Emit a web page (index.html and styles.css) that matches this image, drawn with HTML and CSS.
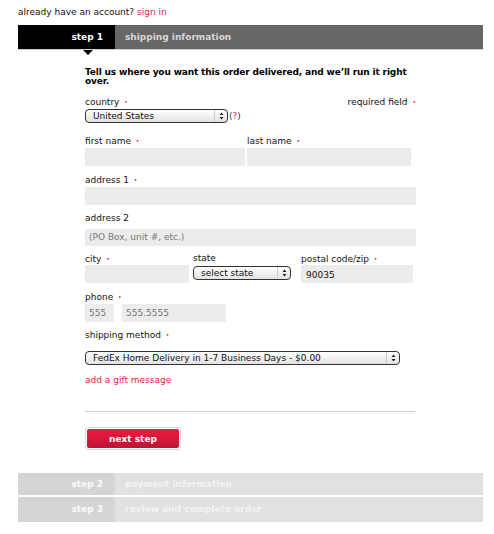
FILE: index.html
```html
<!DOCTYPE html>
<html>
<head>
<meta charset="utf-8">
<link rel="stylesheet" href="styles.css">
</head>
<body>
<div class="page">
  <div class="account">already have an account? <a class="link">sign in</a></div>

  <div class="step active">
    <div class="step-num">step 1</div>
    <div class="step-title">shipping information</div>
    <span class="pointer"></span>
  </div>

  <div class="form">
    <p class="intro">Tell us where you want this order delivered, and we’ll run it right over.</p>

    <div class="label-row">
      <span class="label">country <i class="req">•</i></span>
      <span class="label">required field <i class="req">•</i></span>
    </div>
    <div class="country-row">
      <div class="select sel-country"><span>United States</span><span class="arrows"><svg width="5" height="8" viewBox="0 0 5 8"><path d="M2.5 0.5 L4.5 3 L0.5 3 Z M2.5 7.5 L4.5 5 L0.5 5 Z" fill="#222"/></svg></span></div>
      <span class="help">(<span class="q">?</span>)</span>
    </div>

    <div class="row two">
      <div class="field">
        <span class="label">first name <i class="req">•</i></span>
        <div class="input w-first"></div>
      </div>
      <div class="field">
        <span class="label">last name <i class="req">•</i></span>
        <div class="input w-last"></div>
      </div>
    </div>

    <div class="field block addr1">
      <span class="label">address 1 <i class="req">•</i></span>
      <div class="input w-full"></div>
    </div>

    <div class="field block addr2">
      <span class="label">address 2</span>
      <div class="input w-full short placeholder">(PO Box, unit #, etc.)</div>
    </div>

    <div class="row three">
      <div class="field">
        <span class="label">city <i class="req">•</i></span>
        <div class="input w-city"></div>
      </div>
      <div class="field">
        <span class="label">state</span>
        <div class="select sel-state"><span>select state</span><span class="arrows"><svg width="5" height="8" viewBox="0 0 5 8"><path d="M2.5 0.5 L4.5 3 L0.5 3 Z M2.5 7.5 L4.5 5 L0.5 5 Z" fill="#222"/></svg></span></div>
      </div>
      <div class="field">
        <span class="label">postal code/zip <i class="req">•</i></span>
        <div class="input w-zip value">90035</div>
      </div>
    </div>

    <div class="field block phone-field">
      <span class="label">phone <i class="req">•</i></span>
      <div class="phone">
        <div class="input w-area placeholder">555</div>
        <div class="input w-num placeholder">555.5555</div>
      </div>
    </div>

    <div class="field block ship">
      <span class="label">shipping method <i class="req">•</i></span>
      <div class="select sel-ship"><span>FedEx Home Delivery in 1-7 Business Days - $0.00</span><span class="arrows"><svg width="5" height="8" viewBox="0 0 5 8"><path d="M2.5 0.5 L4.5 3 L0.5 3 Z M2.5 7.5 L4.5 5 L0.5 5 Z" fill="#222"/></svg></span></div>
    </div>

    <a class="link gift">add a gift message</a>

    <hr class="divider">

    <div class="btn-wrap"><button class="btn">next step</button></div>
  </div>

  <div class="step inactive">
    <div class="step-num">step 2</div>
    <div class="step-title">payment information</div>
  </div>
  <div class="step inactive">
    <div class="step-num">step 3</div>
    <div class="step-title">review and complete order</div>
  </div>
</div>
</body>
</html>
```

FILE: styles.css
```css
html, body {
  margin: 0;
  padding: 0;
  background: #fff;
}
body {
  font-family: "DejaVu Sans", Verdana, sans-serif;
  font-size: 9px;
  color: #111;
}
.page {
  margin-left: 18px;
  width: 465px;
}
.account {
  padding-top: 7px;
  height: 25px;
  line-height: 11px;
  box-sizing: border-box;
}
.link {
  color: #e8194b;
  text-decoration: none;
}
.step {
  display: flex;
  position: relative;
  font-weight: bold;
  color: #fff;
}
.step-num {
  width: 97px;
  box-sizing: border-box;
  text-align: right;
  padding-right: 12px;
}
.step-title {
  flex: 1;
  padding-left: 10px;
}
.step.active {
  height: 24px;
  line-height: 24px;
  border-bottom: 1px solid #d0d0d0;
}
.step.active .step-num { background: #000; }
.step.active .step-title { background: #666; color: #d6d6d6; }
.pointer {
  position: absolute;
  left: 65px;
  top: 25px;
  width: 0;
  height: 0;
  border-left: 5px solid transparent;
  border-right: 5px solid transparent;
  border-top: 5px solid #000;
}
.form {
  padding-left: 67px;
  width: 331px;
}
.intro {
  margin: 18px 0 0;
  width: 340px;
  font-weight: bold;
  color: #000;
  line-height: 9px;
  letter-spacing: -0.15px;
}
.label {
  display: block;
  line-height: 11px;
  height: 11px;
  color: #111;
}
.req {
  font-style: normal;
  color: #e8194b;
  font-size: 6px;
  vertical-align: 1px;
  margin-left: 2px;
}
.label-row {
  display: flex;
  justify-content: space-between;
  margin-top: 10px;
}
.country-row {
  display: flex;
  align-items: center;
  height: 14px;
  margin-top: 2px;
}
.help {
  color: #1c2a66;
  margin-left: 1px;
}
.help .q {
  color: #e8194b;
}
.select {
  display: flex;
  justify-content: space-between;
  align-items: center;
  box-sizing: border-box;
  height: 14px;
  border: 1px solid #333;
  border-radius: 4px;
  background: linear-gradient(#ffffff, #f1f1f1 50%, #e2e2e2);
  padding-left: 7px;
  color: #111;
  line-height: 12px;
}
.arrows {
  display: flex;
  align-items: center;
  justify-content: center;
  width: 12px;
  height: 12px;
  border-left: 1px solid #ccc;
}
.sel-country { width: 143px; }
.sel-state { width: 98px; margin-top: 2px; }
.sel-ship { width: 315px; margin-top: 11px; }
.input {
  background: #ececec;
  height: 18px;
  box-sizing: border-box;
  margin-top: 2px;
  padding-left: 4px;
  line-height: 18px;
  overflow: hidden;
}
.input.placeholder { color: #777; }
.input.value { color: #111; padding-left: 5px; line-height: 20px; }
.input.short { height: 17px; line-height: 17px; margin-top: 5px; }
.row {
  display: flex;
}
.row.two { margin-top: 12px; gap: 2px; }
.row.three { margin-top: 7px; }
.row.three .input { margin-top: 1px; }
.row.three .field:nth-child(2) { margin-left: 4px; }
.row.three .field:nth-child(3) { margin-left: 10px; }
.field.block { margin-top: 8px; }
.field.phone-field { margin-top: 8px; }
.field.ship { margin-top: 7px; }
.w-first { width: 160px; }
.w-last { width: 164px; }
.w-full { width: 331px; }
.w-city { width: 104px; }
.w-zip { width: 112px; }
.w-area { width: 29px; }
.w-num { width: 104px; }
.phone {
  display: flex;
  gap: 8px;
}
.gift {
  display: block;
  margin-top: 10px;
  line-height: 11px;
  height: 11px;
}
.divider {
  border: 0;
  border-top: 1px solid #d0d0d0;
  margin: 25px 0 0;
  width: 330px;
}
.btn-wrap {
  margin-top: 15px;
  width: 96px;
  height: 23px;
  box-sizing: border-box;
  border: 1px solid #d8d8d8;
  border-radius: 3px;
  padding: 1px;
  margin-bottom: 23px;
}
.btn {
  display: block;
  width: 100%;
  height: 100%;
  border: 0;
  border-radius: 2px;
  background: linear-gradient(#f2193f, #d2173b 60%, #bb1535);
  color: #fff;
  font-family: "DejaVu Sans", Verdana, sans-serif;
  font-size: 9px;
  font-weight: bold;
  padding: 0;
}
.step.inactive {
  height: 22px;
  line-height: 22px;
}
.step.inactive + .step.inactive {
  margin-top: 2px;
  height: 25px;
  line-height: 25px;
}
.step.inactive .step-num { background: #d5d5d5; color: #fafafa; }
.step.inactive .step-title { background: #e1e1e1; color: #f3f3f3; }
```
